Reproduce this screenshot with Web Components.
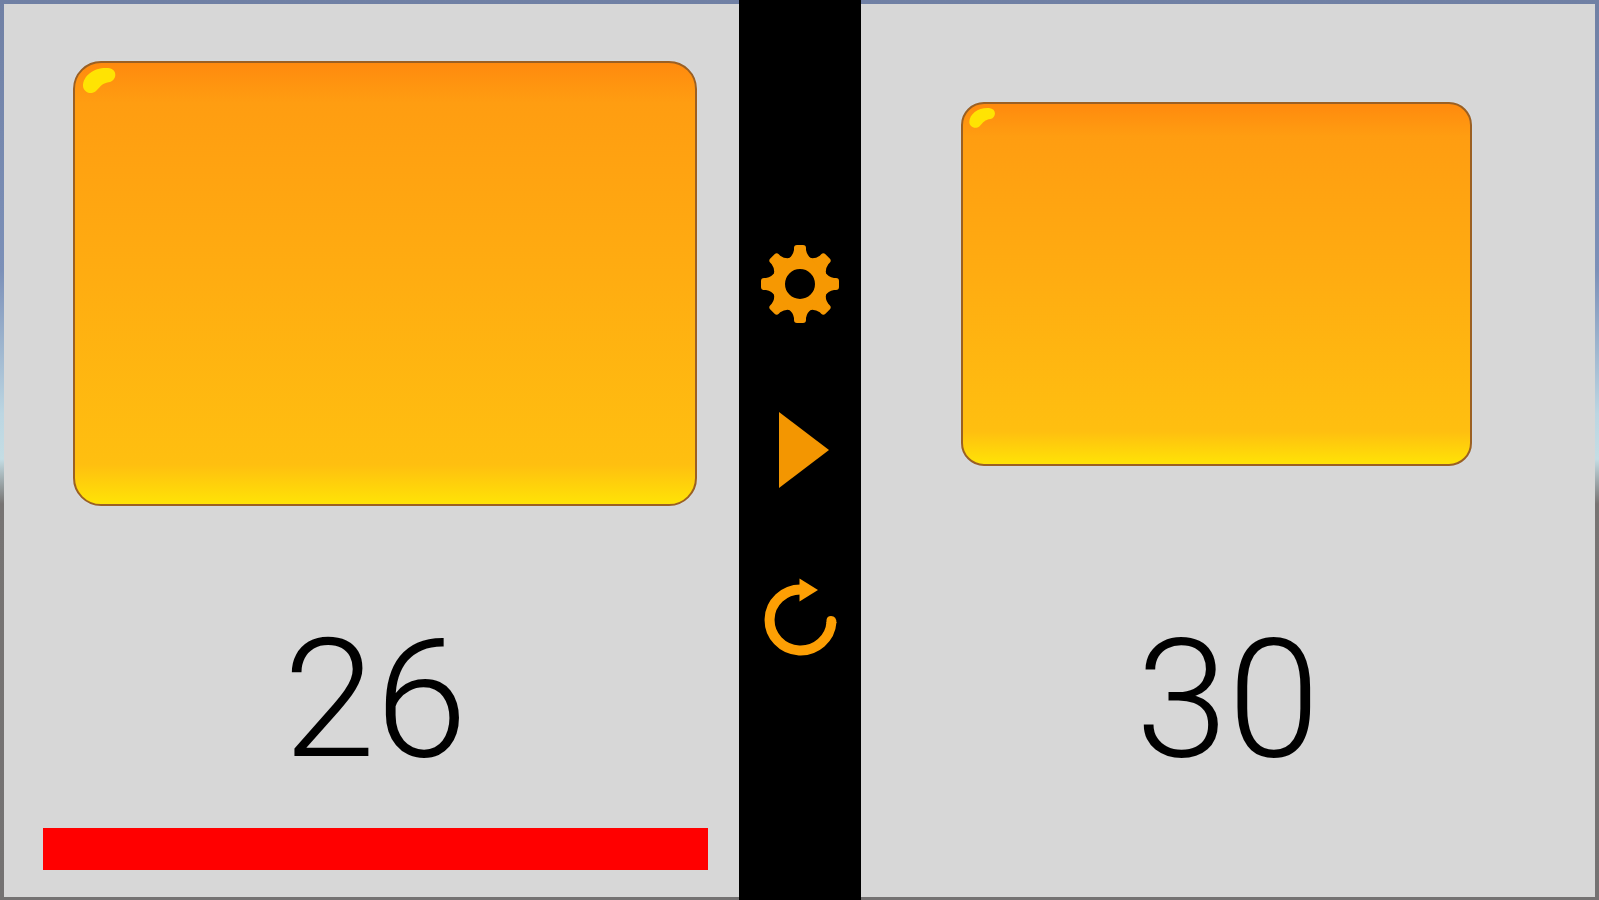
<!DOCTYPE html>
<html lang="en">
<head>
<meta charset="utf-8">
<title>Game clock</title>
<style>
  html, body {
    height: 100%;
  }
  body {
    margin: 0;
    background: linear-gradient(#7080a4 0%, #7c90b8 30%, #bcd6e2 46%, #c4dde4 51%, #777473 56%, #747272 100%);
    font-family: Roboto, "Liberation Sans", sans-serif;
  }
</style>
</head>
<body>
<game-clock>
  <player-panel class="one" label="Player one" active>26</player-panel>
  <clock-controls></clock-controls>
  <player-panel class="two" label="Player two">30</player-panel>
</game-clock>

<script>
/** Board that holds both players and the controls between them */
class GameClock extends HTMLElement {
  constructor() {
    super();
    this.attachShadow({mode: 'open'}).innerHTML = `<style>
        :host {
          box-sizing: border-box;
          display: grid;
          grid-template-columns: minmax(0, 1fr) 122px minmax(0, 1fr);
          min-height: 100%;
          padding: 0 4px;
        }
        ::slotted(player-panel) {
          margin: 4px 0 3px;
        }
        ::slotted(.one) {
          --padMargin: 57px 42px 110px 69px;
          --padRadius: 28px;
          --shineWidth: 48px;
          --infoMargin: 0 31px 0 39px;
        }
        ::slotted(.two) {
          --padMargin: 98px 123px 150px 100px;
          --padRadius: 23px;
          --shineWidth: 38px;
        }
      </style>
      <slot></slot>`;
  }
}

/** One player's half: the big button, the counter and the turn bar */
class PlayerPanel extends HTMLElement {
  constructor() {
    super();
    this.attachShadow({mode: 'open'}).innerHTML = `<style>
        :host {
          background: #d7d7d7;
          box-sizing: border-box;
          display: flex;
          flex-direction: column;
          padding-bottom: 27px;
        }
        glossy-button {
          flex: 1;
          margin: var(--padMargin, 60px);
        }
        .info {
          display: flex;
          flex-direction: column;
          gap: 44px;
          margin: var(--infoMargin, 0);
        }
        output {
          color: #000;
          font-size: 166px;
          font-weight: 300;
          line-height: 168px;
          text-align: center;
        }
        .turn {
          height: 42px;
        }
        :host([active]) .turn {
          background: #f00;
        }
      </style>
      <glossy-button></glossy-button>
      <div class="info">
        <output><slot></slot></output>
        <div class="turn"></div>
      </div>`;
  }

  connectedCallback() {
    const pad = this.shadowRoot.querySelector('glossy-button');
    pad.setAttribute('label', this.getAttribute('label'));
  }
}

/** Orange button with a small highlight in the corner */
class GlossyButton extends HTMLElement {
  static observedAttributes = ['label'];

  constructor() {
    super();
    this.attachShadow({mode: 'open'}).innerHTML = `<style>
        :host {
          display: flex;
        }
        button {
          background: linear-gradient(#ff8a0e 0%, #ff9d11 9%, #ffad11 50%, #ffbf10 91%, #ffe306 100%);
          border: 2px solid #9b6023;
          border-radius: var(--padRadius, 24px);
          box-shadow: 0 0 3px #d5dde6;
          cursor: pointer;
          flex: 1;
          padding: 0;
          position: relative;
        }
        svg {
          left: 0;
          position: absolute;
          top: 0;
          width: var(--shineWidth, 48px);
        }
      </style>
      <button type="button">
        <svg viewBox="0 0 48 36" aria-hidden="true">
          <path d="M8 23C8 12 20 4 33 5C43 6 42 17 35 19C27 20 26 23 21 28C15 33 8 28 8 23Z" fill="#ffe303"/>
        </svg>
      </button>`;
  }

  attributeChangedCallback(name, before, value) {
    this.shadowRoot.querySelector('button').setAttribute('aria-label', value);
  }
}

/** Settings, start and reset */
class ClockControls extends HTMLElement {
  constructor() {
    super();
    this.attachShadow({mode: 'open'}).innerHTML = `<style>
        :host {
          align-items: center;
          background: #000;
          display: flex;
          flex-direction: column;
          gap: 86px;
          justify-content: center;
        }
        button {
          background: none;
          border: 0;
          cursor: pointer;
          height: 80px;
          padding: 0;
          width: 80px;
        }
        svg {
          display: block;
        }
      </style>
      <button type="button" aria-label="Settings">
        <svg viewBox="-40 -40 80 80" width="80" height="80" fill="#f69802">
          <defs>
            <path id="tooth" d="M-12-25Q-7-28-6-34V-36Q-6-39-3-39H3Q6-39 6-36V-34Q7-28 12-25Z"/>
          </defs>
          <circle r="21.5" fill="none" stroke="#f69802" stroke-width="13"/>
          <use href="#tooth"/>
          <use href="#tooth" transform="rotate(45)"/>
          <use href="#tooth" transform="rotate(90)"/>
          <use href="#tooth" transform="rotate(135)"/>
          <use href="#tooth" transform="rotate(180)"/>
          <use href="#tooth" transform="rotate(225)"/>
          <use href="#tooth" transform="rotate(270)"/>
          <use href="#tooth" transform="rotate(315)"/>
        </svg>
      </button>
      <button type="button" aria-label="Start">
        <svg viewBox="0 0 80 80" width="80" height="80">
          <path d="M19 2L69 40L19 78Z" fill="#f39601"/>
        </svg>
      </button>
      <button type="button" aria-label="Reset">
        <svg viewBox="0 0 80 80" width="80" height="80">
          <path d="M41 13.5A31 30.5 0 1 0 71.5 46" fill="none" stroke="#fd9f04" stroke-width="10"/>
          <path d="M66.5 47V44Q67 40 71 40Q76.500 40 76.500 47Z" fill="#fd9f04"/>
          <path d="M39.5 2.500L58 14L39.5 25.500Z" fill="#fd9f04"/>
        </svg>
      </button>`;
  }
}

customElements.define('glossy-button', GlossyButton);
customElements.define('player-panel', PlayerPanel);
customElements.define('clock-controls', ClockControls);
customElements.define('game-clock', GameClock);
</script>
</body>
</html>
